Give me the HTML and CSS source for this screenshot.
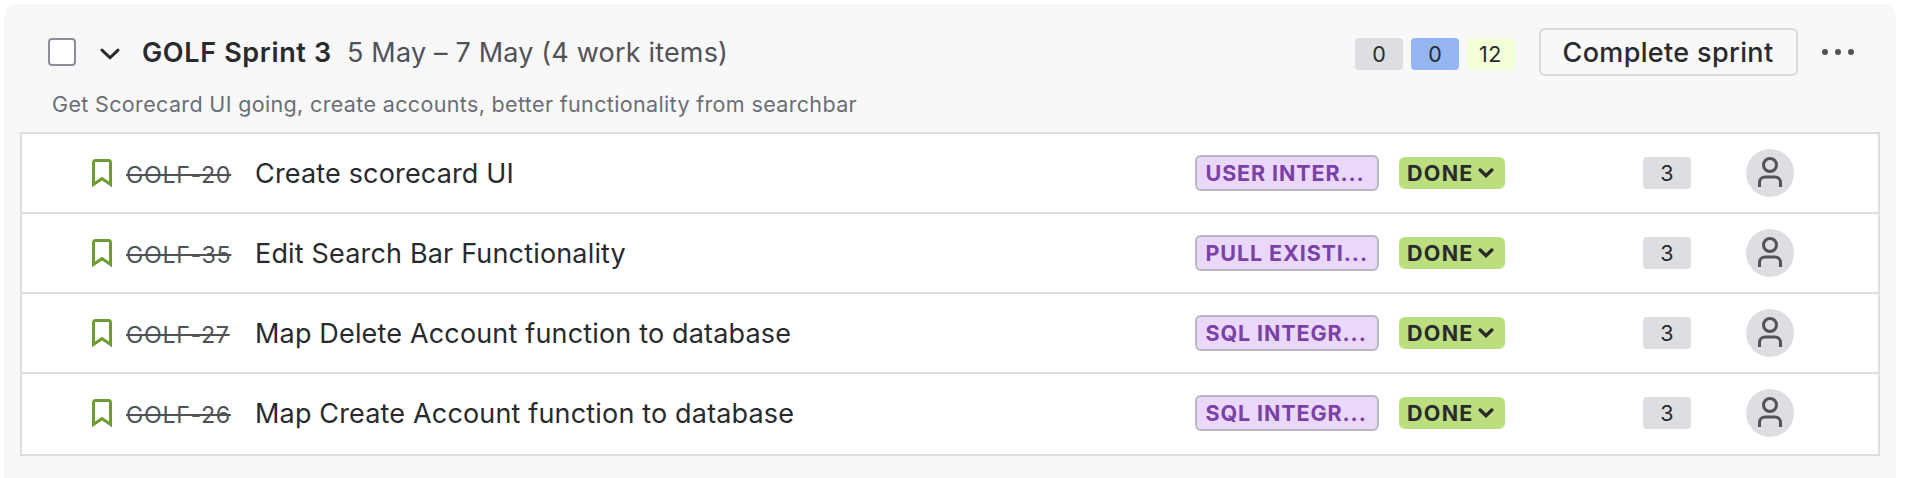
FILE: index.html
```html
<!DOCTYPE html>
<html lang="en">
<head>
<meta charset="utf-8">
<title>Backlog</title>
<link rel="stylesheet" href="styles.css">
</head>
<body>
<svg class="defs" aria-hidden="true">
  <symbol id="bookmark" viewBox="0 0 20 28"><path d="M1.5 25.5V3.5a2 2 0 0 1 2-2h13a2 2 0 0 1 2 2v22L10 19.6z" fill="none" stroke="#6f9b34" stroke-width="3"/></symbol>
  <symbol id="caret" viewBox="0 0 16 12"><path d="M2.2 3 8 8.6 13.8 3" fill="none" stroke="#292a2e" stroke-width="3.4" stroke-linecap="round" stroke-linejoin="miter"/></symbol>
  <symbol id="person" viewBox="0 0 24 30"><circle cx="12" cy="8" r="6.5" fill="none" stroke="#505258" stroke-width="3"/><path d="M1.5 30v-4.5a5.5 5.5 0 0 1 5.5-5.5h10a5.5 5.5 0 0 1 5.5 5.5V30" fill="none" stroke="#505258" stroke-width="3"/></symbol>
</svg>
<section class="sprint">
  <header class="header">
    <span class="checkbox"></span>
    <svg class="toggle" viewBox="0 0 20 12"><path d="M2 2.200 10 9.800 18 2.200" fill="none" stroke="#292a2e" stroke-width="3" stroke-linecap="round"/></svg>
    <h2 class="name">GOLF Sprint 3</h2>
    <span class="dates">5 May – 7 May (4 work items)</span>
    <div class="totals">
      <span class="badge">0</span>
      <span class="badge badge-progress">0</span>
      <span class="badge badge-done">12</span>
    </div>
    <button class="complete">Complete sprint</button>
    <svg class="more" viewBox="0 0 32 6" fill="#505258"><circle cx="3" cy="3" r="3"/><circle cx="16" cy="3" r="3"/><circle cx="29" cy="3" r="3"/></svg>
  </header>
  <p class="goal">Get Scorecard UI going, create accounts, better functionality from searchbar</p>
  <ul class="items">
    <li class="item">
      <svg class="type"><use href="#bookmark"/></svg><span class="key">GOLF-20</span><span class="summary">Create scorecard UI</span>
      <span class="epic">USER INTER...</span><span class="status">DONE<svg class="caret"><use href="#caret"/></svg></span>
      <span class="badge points">3</span><span class="avatar"><svg class="person"><use href="#person"/></svg></span>
    </li>
    <li class="item">
      <svg class="type"><use href="#bookmark"/></svg><span class="key">GOLF-35</span><span class="summary">Edit Search Bar Functionality</span>
      <span class="epic">PULL EXISTI...</span><span class="status">DONE<svg class="caret"><use href="#caret"/></svg></span>
      <span class="badge points">3</span><span class="avatar"><svg class="person"><use href="#person"/></svg></span>
    </li>
    <li class="item">
      <svg class="type"><use href="#bookmark"/></svg><span class="key">GOLF-27</span><span class="summary">Map Delete Account function to database</span>
      <span class="epic">SQL INTEGR...</span><span class="status">DONE<svg class="caret"><use href="#caret"/></svg></span>
      <span class="badge points">3</span><span class="avatar"><svg class="person"><use href="#person"/></svg></span>
    </li>
    <li class="item">
      <svg class="type"><use href="#bookmark"/></svg><span class="key">GOLF-26</span><span class="summary">Map Create Account function to database</span>
      <span class="epic">SQL INTEGR...</span><span class="status">DONE<svg class="caret"><use href="#caret"/></svg></span>
      <span class="badge points">3</span><span class="avatar"><svg class="person"><use href="#person"/></svg></span>
    </li>
  </ul>
</section>
</body>
</html>
```
FILE: styles.css
```css
* { box-sizing: border-box; }
body {
  margin: 0;
  height: 478px;
  overflow: hidden;
  background: #fff;
  color: #292a2e;
  font-family: Inter, "Liberation Sans", sans-serif;
}
.defs { display: none; }
.sprint {
  width: 1892px;
  height: 490px;
  margin: 4px 0 0 4px;
  padding: 24px 16px 0;
  border-radius: 12px;
  background: #f8f8f8;
}
.header {
  display: flex;
  align-items: center;
  height: 48px;
  padding: 0 26px 0 28px;
  white-space: nowrap;
}
.checkbox {
  width: 28px;
  height: 28px;
  border: 2px solid #8c8f97;
  border-radius: 4px;
  background: #fff;
}
.toggle { width: 20px; height: 12px; margin: 3px 0 0 24px; }
.name {
  width: 205px;
  margin: 0 0 0 22px;
  font-size: 27px;
  font-weight: 600;
  letter-spacing: .648px;
}
.dates {
  flex: 1;
  color: #505258;
  font-size: 27px;
  letter-spacing: .18px;
}
.totals { display: flex; gap: 8px; margin: 4px 24px 0 0; }
.badge {
  width: 48px;
  height: 32px;
  border-radius: 4px;
  background: #dddee1;
  font-size: 21.5px;
  line-height: 32px;
  text-align: center;
}
.badge-progress { background: #96b6f2; }
.badge-done { padding-right: 1px; background: #f3ffd9; letter-spacing: .6px; }
.complete {
  width: 259px;
  height: 48px;
  margin-right: 24px;
  padding: 0 1px 0 0;
  border: 2px solid #d9d9da;
  border-radius: 6px;
  background: transparent;
  color: inherit;
  font: 500 27px Inter, "Liberation Sans", sans-serif;
  letter-spacing: .358px;
}
.more { width: 32px; height: 6px; }
.goal {
  height: 56px;
  margin: 0;
  padding: 8px 0 0 32px;
  color: #6b6e76;
  font-size: 21.5px;
  line-height: 41px;
  letter-spacing: .35px;
}
.items {
  width: 1860px;
  height: 324px;
  margin: 0;
  padding: 0;
  list-style: none;
  border: 2px solid #dddddd;
  background: #fff;
}
.item {
  display: flex;
  align-items: center;
  height: 80px;
  padding-left: 70px;
  border-bottom: 2px solid #dddddd;
  white-space: nowrap;
}
.item:last-child { border-bottom-color: transparent; }
.type { width: 20px; height: 28px; }
.key {
  width: 105px;
  margin: 3px 0 0 14px;
  color: #505258;
  font-size: 23.3px;
  letter-spacing: .6px;
  text-decoration: line-through;
  text-decoration-thickness: 2px;
}
.summary {
  flex: 1;
  padding-left: 24px;
  font-size: 27px;
  letter-spacing: .165px;
}
.epic {
  width: 184px;
  height: 36px;
  margin-right: 20px;
  padding-left: 8.5px;
  border: 2px solid #b7b9be;
  border-radius: 6px;
  background: #e9d8f9;
  color: #7b41a6;
  font-size: 21.5px;
  font-weight: 700;
  line-height: 32px;
  letter-spacing: .889px;
}
.status {
  display: flex;
  align-items: center;
  width: 106px;
  height: 32px;
  margin-right: 138px;
  padding-left: 8px;
  border-radius: 6px;
  background: #bbde7f;
  font-size: 21.5px;
  font-weight: 700;
  letter-spacing: 1.27px;
}
.caret { width: 16px; height: 12px; margin-left: 4px; }
.points { margin-right: 55px; }
.avatar {
  display: flex;
  justify-content: center;
  width: 48px;
  height: 48px;
  margin-right: 84px;
  padding-top: 8px;
  border-radius: 50%;
  background: #dddee1;
}
.person { width: 24px; height: 30px; }
```
